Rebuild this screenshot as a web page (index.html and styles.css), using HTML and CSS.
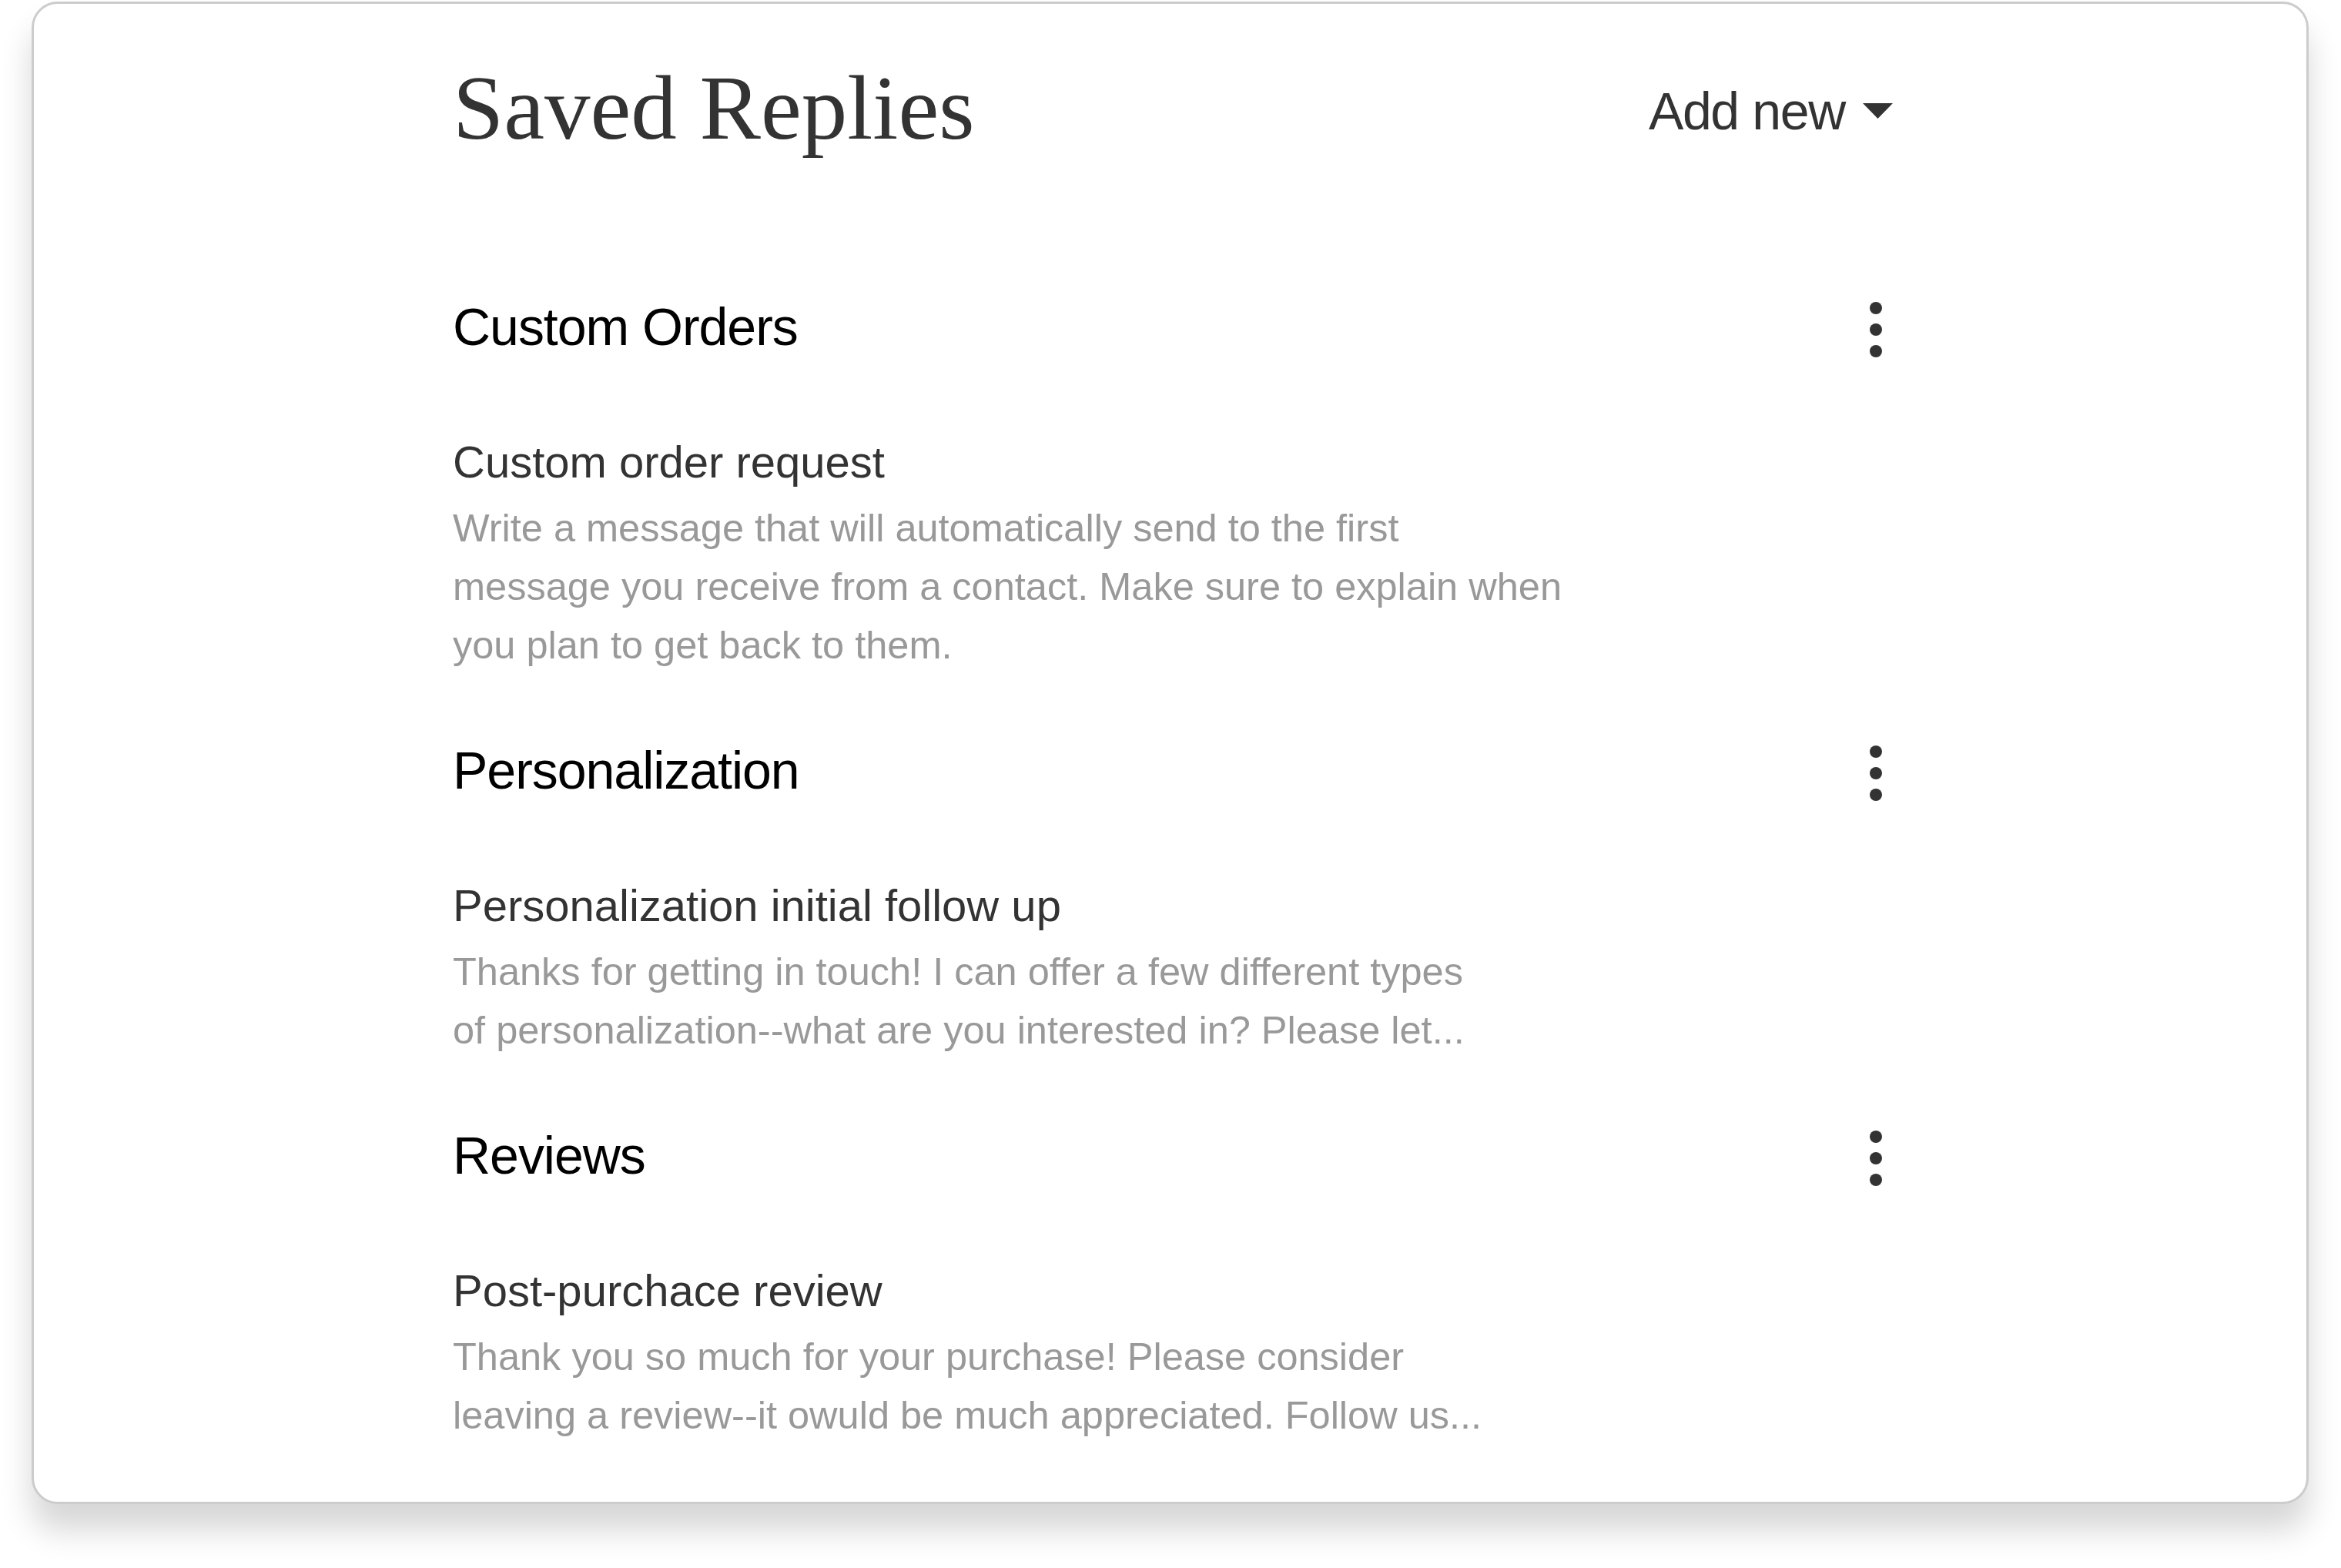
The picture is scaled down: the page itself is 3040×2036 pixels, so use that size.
FILE: index.html
```html
<!DOCTYPE html>
<html>
<head>
    <meta name="viewport" content="width=device-width, initial-scale=1.0">
    <link rel="stylesheet" href="styles.css">
</head>
<body>
    <div class="card">
        <div class="page-head">
            <h1 class="page-title">Saved Replies</h1>
            <button class="add-btn">
                <span>Add new</span>
                <svg class="caret" width="39" height="20" viewBox="0 0 39 20"><polygon points="0,0 39,0 19.5,20" fill="#333"/></svg>
            </button>
        </div>

        <div class="groups">
            <div class="group">
                <div class="group-head">
                    <h2 class="group-title">Custom Orders</h2>
                    <svg class="kebab" width="44" height="72" viewBox="0 0 44 72">
                        <circle cx="22" cy="8" r="8"/>
                        <circle cx="22" cy="36" r="8"/>
                        <circle cx="22" cy="64" r="8"/>
                    </svg>
                </div>
                <div class="reply">
                    <div class="reply-title">Custom order request</div>
                    <p class="reply-text">Write a message that will automatically send to the first<br>message you receive from a contact. Make sure to explain when<br>you plan to get back to them.</p>
                </div>
            </div>

            <div class="group">
                <div class="group-head">
                    <h2 class="group-title">Personalization</h2>
                    <svg class="kebab" width="44" height="72" viewBox="0 0 44 72">
                        <circle cx="22" cy="8" r="8"/>
                        <circle cx="22" cy="36" r="8"/>
                        <circle cx="22" cy="64" r="8"/>
                    </svg>
                </div>
                <div class="reply">
                    <div class="reply-title">Personalization initial follow up</div>
                    <p class="reply-text">Thanks for getting in touch! I can offer a few different types<br>of personalization--what are you interested in? Please let...</p>
                </div>
            </div>

            <div class="group">
                <div class="group-head">
                    <h2 class="group-title">Reviews</h2>
                    <svg class="kebab" width="44" height="72" viewBox="0 0 44 72">
                        <circle cx="22" cy="8" r="8"/>
                        <circle cx="22" cy="36" r="8"/>
                        <circle cx="22" cy="64" r="8"/>
                    </svg>
                </div>
                <div class="reply">
                    <div class="reply-title">Post-purchace review</div>
                    <p class="reply-text">Thank you so much for your purchase! Please consider<br>leaving a review--it owuld be much appreciated. Follow us...</p>
                </div>
            </div>
        </div>
    </div>
</body>
</html>
```

FILE: styles.css
```css
html {
    min-height: 100%;
    background: #fff;
}
body {
    margin: 0;
    padding: 2px 42px 80px 41px;
    background: #fff;
    font-family: "Liberation Sans", Arial, sans-serif;
}
.card {
    background: #fff;
    border: 3px solid #ccc;
    border-radius: 34px;
    box-shadow: 0 34px 40px rgba(0, 0, 0, 0.16);
    padding: 76px 537px 74px 544px;
}
.page-head {
    display: flex;
    justify-content: space-between;
    align-items: center;
}
.page-title {
    margin: 0;
    font-family: "Liberation Serif", "Times New Roman", serif;
    font-weight: normal;
    font-size: 119px;
    line-height: 1;
    color: #333;
}
.add-btn {
    display: flex;
    align-items: center;
    gap: 23px;
    margin-top: 6px;
    padding: 0;
    background: none;
    border: none;
    cursor: pointer;
    font-family: inherit;
    font-size: 68px;
    line-height: 1;
    letter-spacing: -0.02em;
    color: #333;
}
.caret {
    display: block;
}
.groups {
    margin-top: 184px;
    display: flex;
    flex-direction: column;
    gap: 84px;
}
.group-head {
    display: flex;
    justify-content: space-between;
    align-items: center;
}
.group-title {
    margin: 0;
    font-weight: normal;
    font-size: 68px;
    line-height: 1;
    letter-spacing: -0.015em;
    color: #000;
}
.kebab {
    display: block;
    margin-top: 8px;
    fill: #333;
    cursor: pointer;
}
.reply {
    margin-top: 107px;
}
.reply-title {
    font-size: 58px;
    line-height: 1;
    color: #333;
}
.reply-text {
    margin: 19px 0 0;
    font-size: 50.5px;
    line-height: 76px;
    color: #999;
}
```
